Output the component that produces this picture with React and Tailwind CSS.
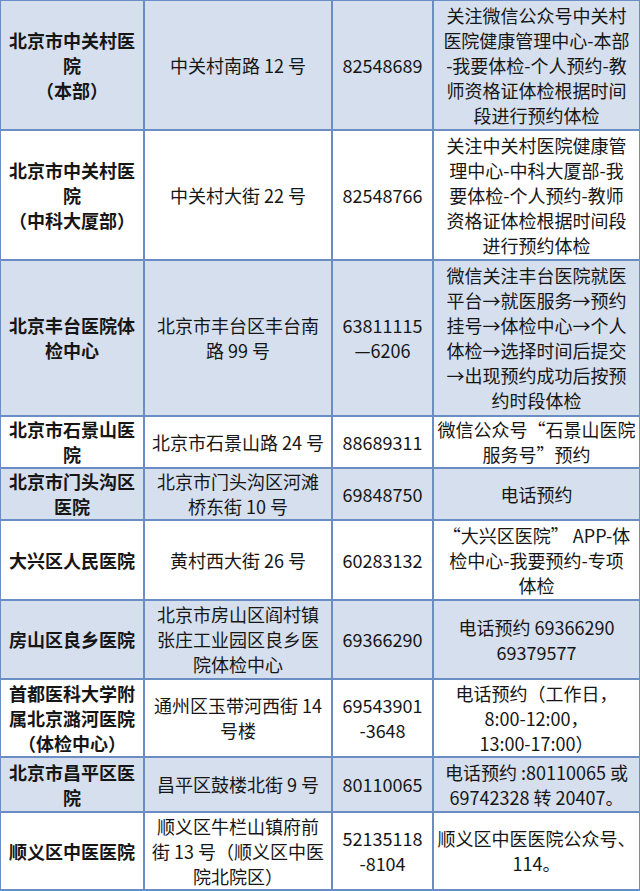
import React from "react";

const rows = [
  {
    h: "h-[128px]",
    blue: true,
    c: [
      ["北京市中关村医", "院", "（本部）"],
      ["中关村南路 12 号"],
      ["82548689"],
      ["关注微信公众号中关村", "医院健康管理中心-本部", "-我要体检-个人预约-教", "师资格证体检根据时间", "段进行预约体检"],
    ],
  },
  {
    h: "h-[128px]",
    blue: false,
    c: [
      ["北京市中关村医", "院", "（中科大厦部）"],
      ["中关村大街 22 号"],
      ["82548766"],
      ["关注中关村医院健康管", "理中心-中科大厦部-我", "要体检-个人预约-教师", "资格证体检根据时间段", "进行预约体检"],
    ],
  },
  {
    h: "h-[154px]",
    blue: true,
    c: [
      ["北京丰台医院体", "检中心"],
      ["北京市丰台区丰台南", "路 99 号"],
      ["63811115", "—6206"],
      ["微信关注丰台医院就医", "平台→就医服务→预约", "挂号→体检中心→个人", "体检→选择时间后提交", "→出现预约成功后按预", "约时段体检"],
    ],
  },
  {
    h: "h-[50px]",
    blue: false,
    c: [
      ["北京市石景山医", "院"],
      ["北京市石景山路 24 号"],
      ["88689311"],
      ["微信公众号“石景山医院", "服务号”预约"],
    ],
  },
  {
    h: "h-[50px]",
    blue: true,
    c: [
      ["北京市门头沟区", "医院"],
      ["北京市门头沟区河滩", "桥东街 10 号"],
      ["69848750"],
      ["电话预约"],
    ],
  },
  {
    h: "h-[78px]",
    blue: false,
    c: [
      ["大兴区人民医院"],
      ["黄村西大街 26 号"],
      ["60283132"],
      ["“大兴区医院” APP-体", "检中心-我要预约-专项", "体检"],
    ],
  },
  {
    h: "h-[77px]",
    blue: true,
    c: [
      ["房山区良乡医院"],
      ["北京市房山区阎村镇", "张庄工业园区良乡医", "院体检中心"],
      ["69366290"],
      ["电话预约 69366290", "69379577"],
    ],
  },
  {
    h: "h-[76px]",
    blue: false,
    c: [
      ["首都医科大学附", "属北京潞河医院", "（体检中心）"],
      ["通州区玉带河西街 14", "号楼"],
      ["69543901", "-3648"],
      ["电话预约（工作日，", "8:00-12:00，", "13:00-17:00）"],
    ],
  },
  {
    h: "h-[53px]",
    blue: true,
    c: [
      ["北京市昌平区医", "院"],
      ["昌平区鼓楼北街 9 号"],
      ["80110065"],
      ["电话预约 :80110065 或", "69742328 转 20407。"],
    ],
  },
  {
    h: "h-[76px]",
    blue: false,
    c: [
      ["顺义区中医医院"],
      ["顺义区牛栏山镇府前", "街 13 号（顺义区中医", "院北院区）"],
      ["52135118", "-8104"],
      ["顺义区中医医院公众号、", "114。"],
    ],
  },
];

function Cell({ lines, bold, blue, h }) {
  return (
    <div
      className={`${h} ${blue ? "bg-[#d5dfee]" : "bg-white"} flex flex-col items-center justify-center overflow-hidden text-center`}
    >
      {lines.map((l, i) => (
        <div
          key={i}
          className={`whitespace-nowrap text-[18px] leading-[25px] text-[#161616] ${bold ? "font-bold" : "font-normal"}`}
        >
          {l}
        </div>
      ))}
    </div>
  );
}

export default function App() {
  return (
    <div
      className="w-[640px] h-[891px] bg-[#6a8ec4] pt-[1px] pl-[1px] pr-[1px] pb-[2px] overflow-hidden"
      style={{ fontFamily: '"Noto Sans CJK SC", "Noto Sans", sans-serif' }}
    >
      <div className="grid grid-cols-[142px_186px_99px_1fr] gap-[2px]">
        {rows.map((r, ri) => (
          <React.Fragment key={ri}>
            {r.c.map((lines, ci) => (
              <Cell key={ci} lines={lines} bold={ci === 0} blue={r.blue} h={r.h} />
            ))}
          </React.Fragment>
        ))}
      </div>
    </div>
  );
}
